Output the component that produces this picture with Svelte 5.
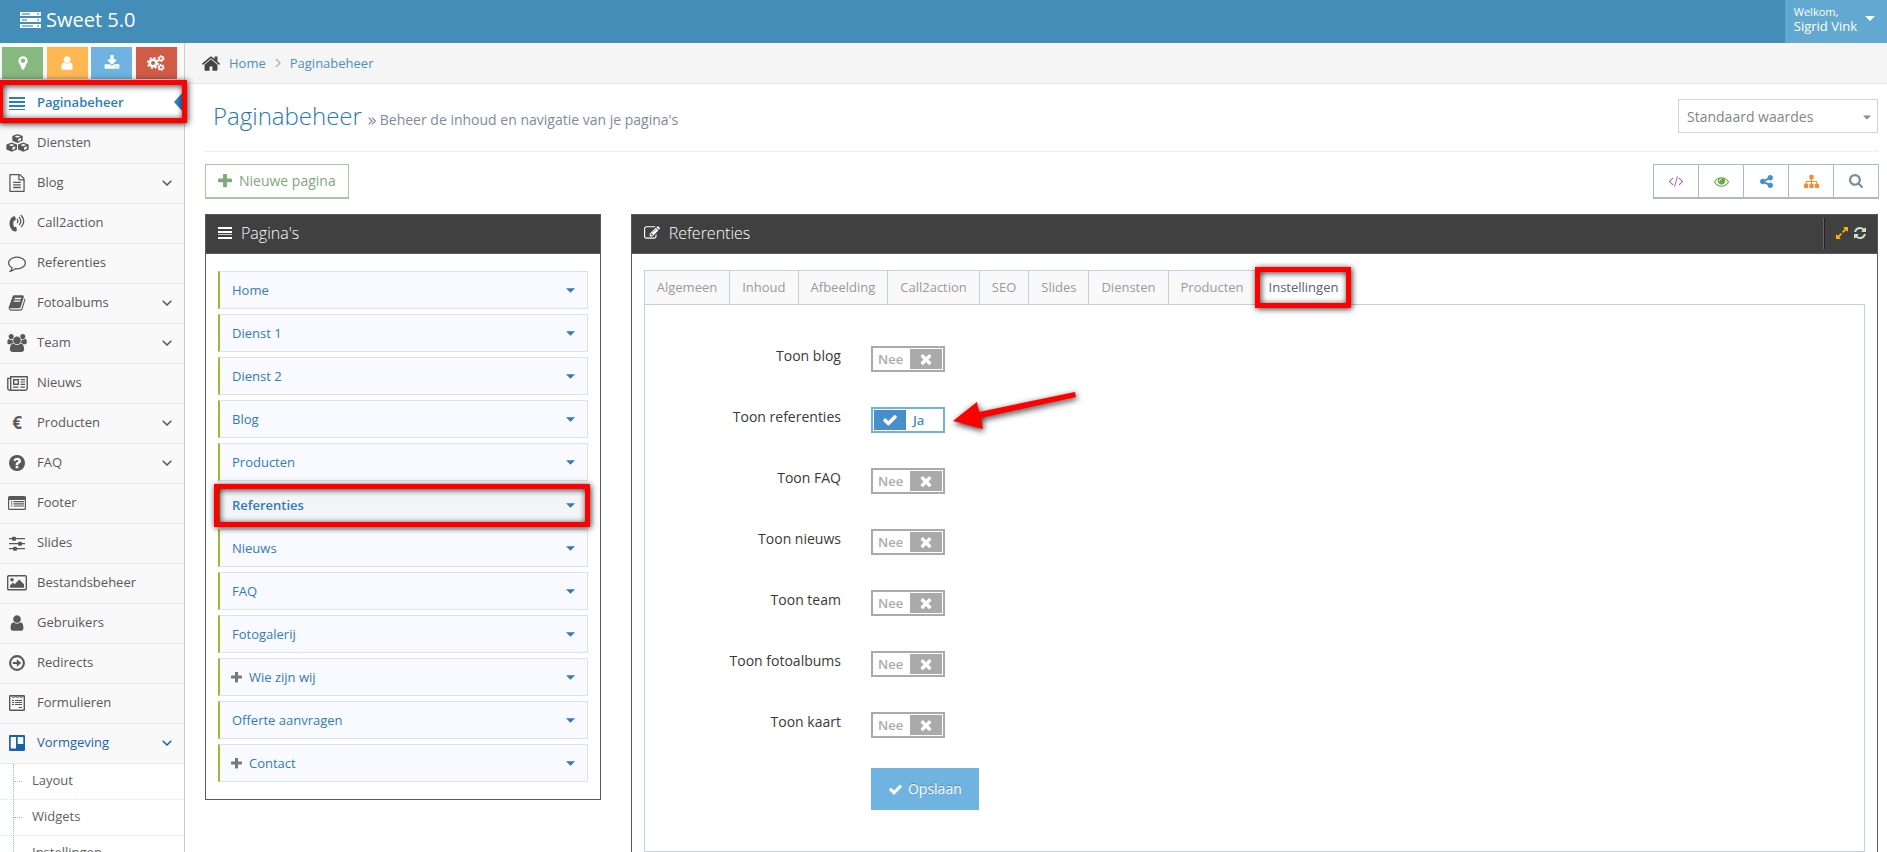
<script>
  const FA = '0 0 1792 1792';

  const icons = {
    server: {
      vb: '0 0 21 16',
      body: '<path fill-rule="evenodd" d="M0 0h21v4H0zM2 1h8v2H2zM17 1h2v2h-2zM0 6h21v4H0zM2 7h5v2H2zM17 7h2v2h-2zM0 12h21v4H0zM2 13h11v2H2zM17 13h2v2h-2z"/><path d="M2 1h17v2H2zM2 7h17v2H2zM2 13h17v2H2z" opacity=".4"/>'
    },
    marker: {
      vb: FA,
      body: '<path d="M1152 640q0-106-75-181t-181-75-181 75-75 181 75 181 181 75 181-75 75-181zm256 0q0 109-33 179l-364 774q-16 33-47.5 52t-67.5 19-67.5-19-46.5-52l-365-774q-33-70-33-179 0-212 150-362t362-150 362 150 150 362z"/>'
    },
    user: {
      vb: FA,
      body: '<path d="M1536 1399q0 109-62.5 187t-150.5 78h-854q-88 0-150.5-78t-62.5-187q0-85 8.5-160.5t31.5-152 58.5-131 94-89 134.5-34.5q131 128 313 128t313-128q76 0 134.5 34.5t94 89 58.5 131 31.5 152 8.5 160.5zm-256-887q0 159-112.5 271.5t-271.5 112.5-271.5-112.5-112.5-271.5 112.5-271.5 271.5-112.5 271.5 112.5 112.5 271.5z"/>'
    },
    download: {
      vb: FA,
      body: '<path d="M1344 1344q0-26-19-45t-45-19-45 19-19 45 19 45 45 19 45-19 19-45zm256 0q0-26-19-45t-45-19-45 19-19 45 19 45 45 19 45-19 19-45zm128-224v320q0 40-28 68t-68 28h-1472q-40 0-68-28t-28-68v-320q0-40 28-68t68-28h465l135 136q58 56 136 56t136-56l136-136h464q40 0 68 28t28 68zm-325-569q17 41-14 70l-448 448q-18 19-45 19t-45-19l-448-448q-31-29-14-70 17-39 59-39h256v-448q0-26 19-45t45-19h256q26 0 45 19t19 45v448h256q42 0 59 39z"/>'
    },
    cogs: {
      vb: '0 0 18 16',
      body: '<g fill="none" stroke="currentColor"><circle cx="6" cy="8" r="3.3" stroke-width="2.6"/><circle cx="6" cy="8" r="5.2" stroke-width="1.8" stroke-dasharray="2 2.08"/><circle cx="14" cy="3.6" r="1.9" stroke-width="1.5"/><circle cx="14" cy="3.6" r="3" stroke-width="1.1" stroke-dasharray="1.6 1.54"/><circle cx="14" cy="12.4" r="1.9" stroke-width="1.5"/><circle cx="14" cy="12.4" r="3" stroke-width="1.1" stroke-dasharray="1.6 1.54"/></g>'
    },
    lines: { vb: '0 0 16 16', body: '<path d="M0 2h16v2H0zM0 6h16v2H0zM0 10h16v2H0zM0 14h16v1H0z"/>' },
    bars: { vb: '0 0 14 14', body: '<path d="M0 1h14v2H0zM0 5h14v2H0zM0 11h14v2H0z"/><path d="M0 8h14v1H0z" opacity=".75"/>' },
    cubes: {
      vb: '0 0 23 18',
      body: '<path d="M11.500 0l5.200 2v4.800l-5.200 2.300-5.200-2.300V2z"/><path d="M5.700 8.500l5.300 2v4.900l-5.300 2.400-5.300-2.400v-4.900z"/><path d="M17.300 8.500l5.300 2v4.900l-5.300 2.400-5.300-2.400v-4.900z"/><g fill="#f9f9f9"><path d="M8.600 2.500l2.900-1.100 2.900 1.100-2.900 1.200z"/><path d="M12.200 4.900l2.800-1.200v2.500l-2.800 1.200z"/><path d="M2.800 11l2.900-1.100L8.600 11l-2.900 1.200z"/><path d="M6.400 13.400l2.800-1.200v2.500l-2.800 1.200z"/><path d="M14.400 11l2.900-1.100 2.900 1.100-2.900 1.200z"/><path d="M18 13.400l2.800-1.200v2.500L18 15.900z"/></g>'
    },
    file: {
      vb: '128 0 1536 1792',
      body: '<path d="M1596 380q28 28 48 76t20 88v1152q0 40-28 68t-68 28h-1344q-40 0-68-28t-28-68v-1600q0-40 28-68t68-28h896q40 0 88 20t76 48zm-444-244v376h376q-10-29-22-41l-313-313q-12-12-41-22zm384 1528v-1024h-416q-40 0-68-28t-28-68v-416h-768v1536h1280zm-1024-864q0-14 9-23t23-9h704q14 0 23 9t9 23v64q0 14-9 23t-23 9h-704q-14 0-23-9t-9-23v-64zm736 224q14 0 23 9t9 23v64q0 14-9 23t-23 9h-704q-14 0-23-9t-9-23v-64q0-14 9-23t23-9h704zm0 256q14 0 23 9t9 23v64q0 14-9 23t-23 9h-704q-14 0-23-9t-9-23v-64q0-14 9-23t23-9h704z"/>'
    },
    phone: {
      vb: '0 0 16 18',
      body: '<path d="M4.800 2.300c.8-.4 1.300 0 1.500.8l.5 2.200c.1.700-.1 1.100-.8 1.300l-1.300.3c-.7 2-.5 4.200.4 6.100l1.200-.2c.7-.1 1.100.2 1.200.9l.3 2.300c0 .8-.3 1.300-1.100 1.400-1.600.1-2.900-.3-3.900-1.600C.6 13-.1 9.600 1 6.400c.6-2 1.900-3.400 3.800-4.100z"/><g fill="none" stroke="currentColor" stroke-width="1.300" stroke-linecap="round"><path d="M8.200 5.400q1.500 1.600.2 3.300"/><path d="M10.200 3.400q3.100 3.500.3 7.200"/><path d="M12.200 1.500q4.900 5.400.3 11.100"/></g>'
    },
    comment: {
      vb: FA,
      body: '<path d="M896 384q-204 0-381.500 69.500t-282 187.500-104.500 255q0 112 71.500 213.500t201.500 175.500l87 50-27 96q-24 91-70 172 152-63 275-171l43-38 57 6q69 8 130 8 204 0 381.500-69.500t282-187.500 104.500-255-104.500-255-282-187.500-381.500-69.500zm896 512q0 174-120 321.500t-326 233-450 85.500q-70 0-145-8-198 175-460 242-49 14-114 22h-5q-15 0-27-10.500t-16-27.500v-1q-3-4-.5-12t2-10 4.500-9.500l6-9 7-8.500 8-9q7-8 31-34.500t34.500-38 31-39.500 32.500-51 27-59 26-76q-157-89-247.500-220t-90.500-281q0-174 120-321.500t326-233 450-85.500 450 85.500 326 233 120 321.500z"/>'
    },
    book: {
      vb: FA,
      body: '<path d="M1703 478q40 57 18 129l-275 906q-19 64-76.500 107.500t-122.500 43.500h-923q-77 0-148.500-53.500t-99.500-131.500q-24-67-2-127 0-4 3-27t4-37q1-8-3-21.500t-3-19.500q2-11 8-21t16.500-23.500 16.500-23.500q23-38 45-91.500t30-91.500q3-10 .5-30t-.5-28q3-11 17-28t17-23q21-36 42-92t25-90q1-9-2.500-32t.5-28q4-13 22-30.500t22-22.500q19-26 42.500-84.500t27.500-96.500q1-8-3-25.500t-2-26.500q2-8 9-18t18-23 17-21q8-12 16.500-30.500t15-35 16-36 19.500-32 26.500-23.500 36-11.500 47.500 5.500l-1 3q38-9 51-9h761q74 0 114 56t18 130l-274 906q-36 119-71.500 153.500t-128.500 34.500h-869q-27 0-38 15-11 16-1 43 24 70 144 70h923q29 0 56-15.500t35-41.500l300-987q7-22 5-57 38 15 59 43zm-1064 2q-4 13 2 22.500t20 9.500h608q13 0 25.500-9.500t16.500-22.500l21-64q4-13-2-22.500t-20-9.500h-608q-13 0-25.500 9.500t-16.500 22.500zm-83 256q-4 13 2 22.500t20 9.500h608q13 0 25.500-9.500t16.500-22.500l21-64q4-13-2-22.500t-20-9.500h-608q-13 0-25.500 9.500t-16.500 22.500z"/>'
    },
    users: {
      vb: '0 0 1920 1792',
      body: '<path d="M593 896q-162 5-265 128h-134q-82 0-138-40.500t-56-118.500q0-353 124-353 6 0 43.500 21t97.500 42.500 119 21.500q67 0 133-23-5 37-5 66 0 159 93 293zm1071 637q0 120-73 189.500t-194 69.500h-874q-121 0-194-69.500t-73-189.500q0-53 3.500-103.500t14-109 26.500-108.500 43-97.500 62-81 85.500-53.500 111.500-20q10 0 43 21.500t73 48 107 48 135 21.500 135-21.500 107-48 73-48 43-21.500q61 0 111.500 20t85.500 53.500 62 81 43 97.500 26.500 108.500 14 109 3.500 103.500zm-1024-1277q0 106-75 181t-181 75-181-75-75-181 75-181 181-75 181 75 75 181zm704 384q0 159-112.500 271.500t-271.500 112.500-271.500-112.500-112.500-271.500 112.500-271.500 271.500-112.500 271.500 112.500 112.500 271.500zm576 225q0 78-56 118.500t-138 40.500h-134q-103-123-265-128 93-134 93-293 0-29-5-66 66 23 133 23 59 0 119-21.500t97.500-42.500 43.500-21q124 0 124 353zm-128-609q0 106-75 181t-181 75-181-75-75-181 75-181 181-75 181 75 75 181z"/>'
    },
    news: {
      vb: '0 0 21 15',
      body: '<g fill="none" stroke="currentColor" stroke-width="1.400"><path d="M3.700 .8h16.500v11.700q0 1.700-1.700 1.700H2.400q1.300 0 1.300-1.700z"/><path d="M3.700 2.400H.8v10.200q0 1.600 1.600 1.600"/><path d="M6.700 3.700h4.600v4.600H6.700z"/><path d="M13.500 3.700H18M13.500 6H18M13.500 8.300H18M6 11.200h5.500M13.500 11.200H18" stroke-width="1.200"/></g>'
    },
    question: {
      vb: '128 128 1536 1536',
      body: '<path d="M1024 1376v-192q0-14-9-23t-23-9h-192q-14 0-23 9t-9 23v192q0 14 9 23t23 9h192q14 0 23-9t9-23zm256-672q0-88-55.500-163t-138.500-116-170-41q-243 0-371 213-15 24 8 42l132 100q7 6 19 6 16 0 25-12 53-68 86-92 34-24 86-24 48 0 85.500 26t37.500 59q0 38-20 61t-68 45q-63 28-115.500 86.500t-52.500 125.500v36q0 14 9 23t23 9h192q14 0 23-9t9-23q0-19 21.500-49.500t54.500-49.500q32-18 49-28.500t46-35 44.500-48 28-60.500 12.500-81zm384 192q0 209-103 385.500t-279.500 279.500-385.500 103-385.500-103-279.500-279.500-103-385.500 103-385.500 279.500-279.500 385.500-103 385.500 103 279.500 279.500 103 385.500z"/>'
    },
    list: {
      vb: '0 0 18 14',
      body: '<path fill-rule="evenodd" d="M1.500 0h15Q18 0 18 1.500v11q0 1.500-1.500 1.500h-15Q0 14 0 12.500v-11Q0 0 1.500 0zM1.200 4v8.300q0 .5.5.5h14.600q.5 0 .5-.5V4z"/><path d="M3 5h1.300v1.200H3zM3 7.200h1.300v1.200H3zM3 9.400h1.300v1.200H3zM5.500 5H16v1.200H5.500zM5.500 7.200H16v1.200H5.500zM5.500 9.400H16v1.200H5.500z"/>'
    },
    sliders: {
      vb: '0 0 16 15',
      body: '<path d="M0 2h16v1.300H0zM0 7h16v1.300H0zM0 12h16v1.300H0z"/><rect x="3" y=".7" width="4" height="4" rx="1"/><rect x="9" y="5.700" width="4" height="4" rx="1"/><rect x="4" y="10.700" width="4" height="4" rx="1"/>'
    },
    picture: {
      vb: '0 0 20 16',
      body: '<rect x=".7" y=".7" width="18.600" height="14" rx="1" fill="none" stroke="currentColor" stroke-width="1.400"/><circle cx="5" cy="4.700" r="1.800"/><path d="M3 12.700v-2.200l3-3 1.700 1.700 4.600-4.700 4.700 4.800v3.400z"/>'
    },
    arrowCircle: {
      vb: '0 0 16 16',
      body: '<circle cx="8" cy="8" r="6.900" fill="none" stroke="currentColor" stroke-width="2.100"/><path d="M3.800 6.900h4V4.300L12.200 8l-4.400 3.700V9.100h-4z"/>'
    },
    form: {
      vb: '0 0 16 16',
      body: '<g fill="none" stroke="currentColor"><rect x=".7" y=".7" width="14.600" height="14.600" rx=".5" stroke-width="1.400"/><path d="M2.500 1l2.200 2 2-2 1.800 2 2-2 1.800 2L14 1" stroke-width="1"/><path d="M3 5.500h2M6 5.500h7M3 7.500h2M6 7.500h7M3 9.500h2M6 9.500h7M9.500 12.500h3.500" stroke-width="1"/></g>'
    },
    board: {
      vb: '0 0 16 16',
      body: '<path fill-rule="evenodd" d="M1 0h14q1 0 1 1v14q0 1-1 1H1q-1 0-1-1V1q0-1 1-1zM1.700 2v11.500H7V2zM8.700 2v7h5.600V2z"/>'
    },
    home: {
      vb: '90 230 1612 1310',
      body: '<path d="M1472 992v480q0 26-19 45t-45 19h-384v-384h-256v384h-384q-26 0-45-19t-19-45v-480q0-1 .5-3t.5-3l575-474 575 474q1 2 1 6zm223-69l-62 74q-8 9-21 11h-3q-13 0-21-7l-692-577-692 577q-12 8-24 7-13-2-21-11l-62-74q-8-10-7-23.500t11-21.500l719-599q32-26 76-26t76 26l244 204v-195q0-14 9-23t23-9h192q14 0 23 9t9 23v408l219 182q10 8 11 21.500t-7 23.500z"/>'
    },
    plus: {
      vb: '192 192 1408 1408',
      body: '<path d="M1600 736v192q0 40-28 68t-68 28h-416v416q0 40-28 68t-68 28h-192q-40 0-68-28t-28-68v-416h-416q-40 0-68-28t-28-68v-192q0-40 28-68t68-28h416v-416q0-40 28-68t68-28h192q40 0 68 28t28 68v416h416q40 0 68 28t28 68z"/>'
    },
    check: {
      vb: FA,
      body: '<path d="M1671 566q0 40-28 68l-724 724-136 136q-28 28-68 28t-68-28l-136-136-362-362q-28-28-28-68t28-68l136-136q28-28 68-28t68 28l294 295 656-657q28-28 68-28t68 28l136 136q28 28 28 68z"/>'
    },
    times: {
      vb: FA,
      body: '<path d="M1490 1322q0 40-28 68l-136 136q-28 28-68 28t-68-28l-294-294-294 294q-28 28-68 28t-68-28l-136-136q-28-28-28-68t28-68l294-294-294-294q-28-28-28-68t28-68l136-136q28-28 68-28t68 28l294 294 294-294q28-28 68-28t68 28l136 136q28 28 28 68t-28 68l-294 294 294 294q28 28 28 68z"/>'
    },
    search: {
      vb: '64 128 1664 1664',
      body: '<path d="M1216 832q0-185-131.500-316.500t-316.500-131.500-316.500 131.500-131.500 316.500 131.500 316.500 316.500 131.500 316.500-131.500 131.500-316.500zm512 832q0 52-38 90t-90 38q-54 0-90-38l-343-342q-179 124-399 124-143 0-273.500-55.500t-225-150-150-225-55.500-273.500 55.500-273.500 150-225 225-150 273.500-55.500 273.500 55.500 225 150 150 225 55.500 273.500q0 220-124 399l343 343q37 37 37 90z"/>'
    },
    share: {
      vb: FA,
      body: '<path d="M1344 1024q133 0 226.500 93.500t93.500 226.500-93.500 226.500-226.500 93.500-226.500-93.500-93.500-226.500q0-12 2-34l-360-180q-92 86-218 86-133 0-226.500-93.500t-93.500-226.500 93.500-226.500 226.500-93.500q126 0 218 86l360-180q-2-22-2-34 0-133 93.500-226.500t226.500-93.500 226.500 93.500 93.500 226.500-93.500 226.500-226.500 93.500q-126 0-218-86l-360 180q2 22 2 34t-2 34l360 180q92-86 218-86z"/>'
    },
    sitemap: {
      vb: FA,
      body: '<path d="M1792 1248v320q0 40-28 68t-68 28h-320q-40 0-68-28t-28-68v-320q0-40 28-68t68-28h96v-192h-512v192h96q40 0 68 28t28 68v320q0 40-28 68t-68 28h-320q-40 0-68-28t-28-68v-320q0-40 28-68t68-28h96v-192h-512v192h96q40 0 68 28t28 68v320q0 40-28 68t-68 28h-320q-40 0-68-28t-28-68v-320q0-40 28-68t68-28h96v-192q0-52 38-90t90-38h512v-192h-96q-40 0-68-28t-28-68v-320q0-40 28-68t68-28h320q40 0 68 28t28 68v320q0 40-28 68t-68 28h-96v192h512q52 0 90 38t38 90v192h96q40 0 68 28t28 68z"/>'
    },
    eye: {
      vb: FA,
      body: '<path d="M1664 960q-152-236-381-353 61 104 61 225 0 185-131.500 316.500t-316.500 131.500-316.500-131.500-131.500-316.500q0-121 61-225-229 117-381 353 133 205 333.500 326.500t434.500 121.500 434.500-121.500 333.500-326.500zm-720-384q0-20-14-34t-34-14q-125 0-214.500 89.500t-89.500 214.500q0 20 14 34t34 14 34-14 14-34q0-86 61-147t147-61q20 0 34-14t14-34zm848 384q0 34-20 69-140 230-376.500 368.500t-499.500 138.500-499.500-139-376.500-368q-20-35-20-69t20-69q140-229 376.500-368t499.500-139 499.500 139 376.500 368q20 35 20 69z"/>'
    },
    code: {
      vb: '0 0 2048 1792',
      body: '<path d="M681 1399l-50 50q-10 10-23 10t-23-10l-466-466q-10-10-10-23t10-23l466-466q10-10 23-10t23 10l50 50q10 10 10 23t-10 23l-393 393 393 393q10 10 10 23t-10 23zm591-1067l-373 1291q-4 13-15.500 19.500t-23.500 2.500l-62-17q-13-4-19.500-15.500t-2.500-24.500l373-1291q4-13 15.500-19.500t23.500-2.500l62 17q13 4 19.500 15.500t2.500 24.500zm657 651l-466 466q-10 10-23 10t-23-10l-50-50q-10-10-10-23t10-23l393-393-393-393q-10-10-10-23t10-23l50-50q10-10 23-10t23 10l466 466q10 10 10 23t-10 23z"/>'
    },
    expand: {
      vb: FA,
      body: '<path d="M883 1056q0 13-10 23l-332 332 144 144q19 19 19 45t-19 45-45 19h-448q-26 0-45-19t-19-45v-448q0-26 19-45t45-19 45 19l144 144 332-332q10-10 23-10t23 10l114 114q10 10 10 23zm781-864v448q0 26-19 45t-45 19-45-19l-144-144-332 332q-10 10-23 10t-23-10l-114-114q-10-10-10-23t10-23l332-332-144-144q-19-19-19-45t19-45 45-19h448q26 0 45 19t19 45z"/>'
    },
    refresh: {
      vb: FA,
      body: '<path d="M1639 1056q0 5-1 7-64 268-268 434.500t-478 166.500q-146 0-282.500-55t-243.500-157l-129 129q-19 19-45 19t-45-19-19-45v-448q0-26 19-45t45-19h448q26 0 45 19t19 45-19 45l-137 137q71 66 161 102t187 36q134 0 250-65t186-179q11-17 53-117 8-23 30-23h192q13 0 22.500 9.500t9.500 22.500zm25-800v448q0 26-19 45t-45 19h-448q-26 0-45-19t-19-45 19-45l138-138q-148-137-349-137-134 0-250 65t-186 179q-11 17-53 117-8 23-30 23h-199q-13 0-22.500-9.500t-9.500-22.500v-7q65-268 270-434.500t480-166.500q146 0 284 55.500t245 156.500l130-129q19-19 45-19t45 19 19 45z"/>'
    },
    edit: {
      vb: FA,
      body: '<path d="M888 1184l116-116-152-152-116 116v56h96v96h56zm440-720q-16-16-33 1l-350 350q-17 17-1 33t33-1l350-350q17-17 1-33zm80 594v190q0 119-84.500 203.500t-203.500 84.500h-832q-119 0-203.500-84.500t-84.500-203.500v-832q0-119 84.500-203.500t203.500-84.500h832q63 0 117 25 15 7 18 23 3 17-9 29l-49 49q-14 14-32 8-23-6-45-6h-832q-66 0-113 47t-47 113v832q0 66 47 113t113 47h832q66 0 113-47t47-113v-126q0-13 9-22l64-64q15-15 35-7t20 29zm-96-738l288 288-672 672h-288v-288zm444 132l-92 92-288-288 92-92q28-28 68-28t68 28l152 152q28 28 28 68t-28 68z"/>'
    },
    down: { vb: '0 0 10 6', body: '<path d="M.7 .7L5 5 9.300 .7" fill="none" stroke="currentColor" stroke-width="1.500"/>' },
    right: { vb: '0 0 6 10', body: '<path d="M1 1l4 4-4 4" fill="none" stroke="currentColor" stroke-width="1.500"/>' },
    double: { vb: '0 0 8 8', body: '<path d="M.7 .7L4 4 .7 7.300M4 .7L7.300 4 4 7.300" fill="none" stroke="currentColor" stroke-width="1.200"/>' },
    caret: { vb: '0 0 10 5', body: '<path d="M0 0h10L5 5z"/>' }
  };

  const shortcuts = [
    { icon: 'marker', tone: 'green', label: 'Locatie' },
    { icon: 'user', tone: 'orange', label: 'Gebruiker' },
    { icon: 'download', tone: 'blue', label: 'Download' },
    { icon: 'cogs', tone: 'red', label: 'Beheer' }
  ];

  const menu = [
    { label: 'Paginabeheer', icon: 'lines', w: 16, h: 16, active: true },
    { label: 'Diensten', icon: 'cubes', w: 23, h: 18 },
    { label: 'Blog', icon: 'file', w: 16, h: 18, sub: true },
    { label: 'Call2action', icon: 'phone', w: 16, h: 18 },
    { label: 'Referenties', icon: 'comment', w: 18, h: 18 },
    { label: 'Fotoalbums', icon: 'book', w: 18, h: 18, sub: true },
    { label: 'Team', icon: 'users', w: 20, h: 18, sub: true },
    { label: 'Nieuws', icon: 'news', w: 21, h: 15 },
    { label: 'Producten', sign: '€', sub: true },
    { label: 'FAQ', icon: 'question', w: 16, h: 16, sub: true },
    { label: 'Footer', icon: 'list', w: 18, h: 14 },
    { label: 'Slides', icon: 'sliders', w: 16, h: 15 },
    { label: 'Bestandsbeheer', icon: 'picture', w: 20, h: 16 },
    { label: 'Gebruikers', icon: 'user', w: 18, h: 18 },
    { label: 'Redirects', icon: 'arrowCircle', w: 16, h: 16 },
    { label: 'Formulieren', icon: 'form', w: 16, h: 16 },
    { label: 'Vormgeving', icon: 'board', w: 16, h: 16, sub: true, open: true }
  ];
  const submenu = ['Layout', 'Widgets', 'Instellingen'];

  const tools = [
    { icon: 'code', color: '#a069c3', w: 16, label: 'Code' },
    { icon: 'eye', color: '#69aa46', w: 15, label: 'Bekijken' },
    { icon: 'share', color: '#478fca', w: 15, label: 'Delen' },
    { icon: 'sitemap', color: '#ff892a', w: 15, label: 'Structuur' },
    { icon: 'search', color: '#778f9b', w: 14, label: 'Zoeken' }
  ];

  const pages = [
    { label: 'Home' },
    { label: 'Dienst 1' },
    { label: 'Dienst 2' },
    { label: 'Blog' },
    { label: 'Producten' },
    { label: 'Referenties', active: true },
    { label: 'Nieuws' },
    { label: 'FAQ' },
    { label: 'Fotogalerij' },
    { label: 'Wie zijn wij', children: true },
    { label: 'Offerte aanvragen' },
    { label: 'Contact', children: true }
  ];

  const tabs = ['Algemeen', 'Inhoud', 'Afbeelding', 'Call2action', 'SEO', 'Slides', 'Diensten', 'Producten', 'Instellingen'];

  let settings = $state([
    { id: 'blog', label: 'Toon blog', on: false },
    { id: 'referenties', label: 'Toon referenties', on: true, pointed: true },
    { id: 'faq', label: 'Toon FAQ', on: false },
    { id: 'nieuws', label: 'Toon nieuws', on: false },
    { id: 'team', label: 'Toon team', on: false },
    { id: 'fotoalbums', label: 'Toon fotoalbums', on: false },
    { id: 'kaart', label: 'Toon kaart', on: false }
  ]);
</script>

{#snippet icon(name, w, h)}
  <svg class="icon" width={w} height={h} viewBox={icons[name].vb} fill="currentColor" aria-hidden="true">{@html icons[name].body}</svg>
{/snippet}

<div class="shell">
  <header class="navbar">
    <a class="brand" href="#top">{@render icon('server', 21, 16)}Sweet 5.0</a>
    <button class="account" type="button">
      <span class="who"><small>Welkom,</small><span>Sigrid Vink</span></span>
      {@render icon('caret', 10, 5)}
    </button>
  </header>

  <div class="columns">
    <aside class="sidebar">
      <div class="shortcuts">
        {#each shortcuts as s}
          <button type="button" class={s.tone} aria-label={s.label}>
            {@render icon(s.icon, s.icon === 'cogs' ? 18 : 16, 16)}
          </button>
        {/each}
      </div>
      <nav>
        <ul class="menu">
          {#each menu as item}
            <li class:active={item.active} class:open={item.open}>
              <a href="#menu">
                <span class="pic">
                  {#if item.sign}<b>{item.sign}</b>{:else}{@render icon(item.icon, item.w, item.h)}{/if}
                </span>
                <span class="name">{item.label}</span>
                {#if item.sub}{@render icon('down', 10, 6)}{/if}
              </a>
              {#if item.active}<span class="mark"></span>{/if}
              {#if item.open}
                <ul class="submenu">
                  {#each submenu as sub}<li><a href="#sub">{sub}</a></li>{/each}
                </ul>
              {/if}
            </li>
          {/each}
        </ul>
      </nav>
    </aside>

    <main>
      <nav class="crumbs">
        {@render icon('home', 18, 15)}
        <a href="#home">Home</a>
        {@render icon('right', 6, 10)}
        <a href="#pages">Paginabeheer</a>
      </nav>

      <div class="content">
        <div class="pagehead">
          <h1>Paginabeheer <small>{@render icon('double', 8, 8)} Beheer de inhoud en navigatie van je pagina's</small></h1>
          <div class="picker">
            <select aria-label="Waardes"><option>Standaard waardes</option></select>
            {@render icon('caret', 8, 5)}
          </div>
        </div>

        <div class="actions">
          <button type="button" class="new">{@render icon('plus', 14, 14)}Nieuwe pagina</button>
          <div class="tools">
            {#each tools as t}
              <button type="button" aria-label={t.label} style:color={t.color}>{@render icon(t.icon, t.w, t.w)}</button>
            {/each}
          </div>
        </div>

        <div class="widgets">
          <section class="widget">
            <h2>{@render icon('bars', 14, 14)}Pagina's</h2>
            <ul class="pages">
              {#each pages as p}
                <li class:active={p.active}>
                  {#if p.children}{@render icon('plus', 11, 11)}{/if}
                  <a href="#page">{p.label}</a>
                  <button type="button" aria-label={'Opties ' + p.label}>{@render icon('caret', 9, 5)}</button>
                </li>
              {/each}
            </ul>
          </section>

          <section class="widget wide">
            <div class="bar">
              <h2>{@render icon('edit', 16, 16)}Referenties</h2>
              <div class="barTools">
                <button type="button" class="gold" aria-label="Vergroten">{@render icon('expand', 14, 14)}</button>
                <button type="button" class="mint" aria-label="Vernieuwen">{@render icon('refresh', 14, 14)}</button>
              </div>
            </div>
            <div class="tabbed">
              <div class="tabs" role="tablist">
                {#each tabs as t}
                  <button type="button" role="tab" aria-selected={t === 'Instellingen'} class:active={t === 'Instellingen'}>{t}</button>
                {/each}
              </div>
              <form class="pane">
                {#each settings as s (s.id)}
                  <div class="row">
                    <label for={s.id}>{s.label}</label>
                    <div class="field">
                      <span class="switch" class:on={s.on}>
                        <input type="checkbox" id={s.id} bind:checked={s.on} />
                        <span class="word">{s.on ? 'Ja' : 'Nee'}</span>
                        <span class="knob">{@render icon(s.on ? 'check' : 'times', 16, 16)}</span>
                      </span>
                      {#if s.pointed}
                        <svg class="pointer" width="140" height="56" viewBox="0 0 140 56" fill="red" aria-hidden="true">
                          <path d="M9 34L33 15l2 10L131 5l1 5L37 31l2 11z" />
                        </svg>
                      {/if}
                    </div>
                  </div>
                {/each}
                <div class="row submit">
                  <button type="button" class="save">{@render icon('check', 15, 15)}Opslaan</button>
                </div>
              </form>
            </div>
          </section>
        </div>
      </div>
    </main>
  </div>
</div>

<style>
  :global(body) {
    margin: 0;
    background: #fff;
    color: #393939;
    font: 13px/20px 'Open Sans', sans-serif;
  }
  * { box-sizing: border-box; }
  a { color: inherit; text-decoration: none; }
  button { font: inherit; color: inherit; background: none; border: 0; padding: 0; cursor: pointer; }
  ul { list-style: none; margin: 0; padding: 0; }
  h1, h2 { margin: 0; font-weight: 300; }
  .icon { display: block; flex: none; }

  .shell { display: flex; flex-direction: column; height: 100vh; overflow: hidden; }
  .navbar {
    flex: none;
    display: flex;
    justify-content: space-between;
    height: 43px;
    background: #438eb9;
    color: #fff;
  }
  .brand { display: flex; align-items: center; gap: 5px; padding: 0 0 4px 20px; font-size: 20px; }
  .account {
    display: flex;
    align-items: center;
    gap: 8px;
    padding: 0 12px 6px 9px;
    background: #62a8d1;
    text-align: left;
  }
  .who { display: flex; flex-direction: column; line-height: 14px; }
  .who small { font-size: 11px; }

  .columns { flex: 1; display: flex; min-height: 0; }
  .sidebar {
    flex: none;
    width: 185px;
    background: #f9f9f9;
    border-right: 1px solid #ccc;
    color: #585858;
  }
  .shortcuts { display: flex; justify-content: space-between; padding: 4px 7px 4px 2px; }
  .shortcuts button {
    display: flex;
    align-items: center;
    justify-content: center;
    width: 41px;
    height: 32px;
    color: #fff;
  }
  .green { background: #87b87f; }
  .orange { background: #ffb752; }
  .blue { background: #6fb3e0; }
  .red { background: #d15b47; }

  .menu { border-top: 1px solid #e5e5e5; }
  .menu > li { position: relative; border-bottom: 1px solid #e5e5e5; }
  .menu > li > a { display: flex; align-items: center; height: 39px; padding: 0 12px 1px 0; }
  .pic { width: 34px; display: flex; justify-content: center; flex: none; }
  .pic b { font-size: 17px; }
  .name { flex: 1; padding: 0 0 3px 3px; }
  .menu > .active { color: #2b7dbc; background: #fff; font-weight: 600; }
  .menu > .active::after {
    content: '';
    position: absolute;
    z-index: 2;
    inset: -4px -3px 0 -2px;
    border: 5px solid red;
    box-shadow: 1px 1px 6px rgba(0, 0, 0, 0.8), inset 1px 1px 6px rgba(0, 0, 0, 0.8);
  }
  .mark {
    position: absolute;
    right: 0;
    top: 7px;
    border: 11px solid transparent;
    border-left-width: 0;
    border-right: 10px solid #2b7dbc;
  }
  .open > a { color: #1963aa; }
  .submenu { position: relative; background: #fff; border-top: 1px solid #e5e5e5; color: #616161; }
  .submenu::before {
    content: '';
    position: absolute;
    left: 13px;
    top: 0;
    bottom: 0;
    border-left: 1px dotted #9dbdd6;
  }
  .submenu li { display: flex; align-items: center; border-bottom: 1px dotted #e4e4e4; }
  .submenu li::before { content: ''; width: 8px; margin-left: 14px; border-top: 1px dotted #9dbdd6; }
  .submenu a { padding: 6px 0 9px 10px; }

  main { flex: 1; min-width: 0; }
  .crumbs {
    display: flex;
    align-items: center;
    gap: 9px;
    height: 41px;
    padding-left: 17px;
    background: #f5f5f5;
    border-bottom: 1px solid #e5e5e5;
    color: #4c8fbd;
  }
  .crumbs .icon { color: #b2b6bf; }
  .crumbs .icon:first-child { color: #444; }
  .content { padding: 0 9px 20px 20px; }
  .pagehead {
    display: flex;
    justify-content: space-between;
    align-items: flex-start;
    height: 68px;
    padding: 15px 0 0 8px;
    border-bottom: 1px dotted #e2e2e2;
  }
  h1 { font-size: 24px; line-height: 34px; color: #2679b5; }
  h1 small { font-size: 14px; font-weight: 400; color: #8089a0; }
  h1 .icon { display: inline-block; }
  .picker { position: relative; width: 200px; }
  .picker select {
    appearance: none;
    width: 100%;
    height: 34px;
    padding: 1px 8px 0;
    border: 1px solid #d5d5d5;
    border-radius: 0;
    background: #fff;
    color: #858585;
    font: inherit;
    font-size: 14px;
  }
  .picker .icon { position: absolute; right: 7px; top: 16px; color: #888; pointer-events: none; }

  .actions { display: flex; justify-content: space-between; padding: 12px 0 15px; }
  .new {
    display: flex;
    align-items: center;
    gap: 7px;
    height: 35px;
    padding: 0 12px;
    border: 1px solid #a7c9a1;
    border-bottom-width: 2px;
    color: #81a87b;
    font-size: 14px;
  }
  .tools { display: flex; margin-right: -1px; border: 1px solid #abbac3; border-bottom-width: 2px; }
  .tools button { display: flex; align-items: center; justify-content: center; width: 44px; }
  .tools button + button { width: 45px; border-left: 1px solid #abbac3; }

  .widgets { display: grid; grid-template-columns: repeat(4, 1fr); gap: 30px; align-items: start; }
  .widget { border: 1px solid #595959; }
  .wide { grid-column: span 3; }
  h2 {
    display: flex;
    align-items: center;
    gap: 9px;
    height: 39px;
    padding: 0 12px 3px;
    background: #404040;
    border-bottom: 1px solid #595959;
    color: #fff;
    font-size: 16px;
  }
  .bar { display: flex; background: #404040; }
  .bar h2 { flex: 1; }
  .barTools {
    display: flex;
    align-items: center;
    gap: 4px;
    padding: 0 10px 2px;
    border-bottom: 1px solid #595959;
  }
  .barTools::before { content: ''; width: 2px; height: 31px; margin-right: 6px; background: linear-gradient(90deg, #666 50%, #222 50%); }
  .gold { color: #ffb400; }
  .mint { color: #d3e4cd; }

  .pages { display: flex; flex-direction: column; gap: 5px; padding: 17px 12px; color: #337ab7; }
  .pages li {
    position: relative;
    display: flex;
    align-items: center;
    gap: 7px;
    height: 38px;
    padding: 0 12px 0 11px;
    border: 1px solid #dae2ea;
    border-left: 2px solid #9abc32;
    background: #f8faff;
  }
  .pages a { flex: 1; }
  .pages a:first-child { padding-left: 1px; }
  .pages .icon { color: #777; }
  .pages button .icon { color: #337ab7; }
  .pages .active { background: #f4f5f7; font-weight: 600; }
  .pages .active::after {
    content: '';
    position: absolute;
    z-index: 2;
    inset: -3px -3px -4px -6px;
    border: 5px solid red;
    box-shadow: 1px 1px 6px rgba(0, 0, 0, 0.8), inset 1px 1px 6px rgba(0, 0, 0, 0.8);
    pointer-events: none;
  }

  .tabbed { padding: 16px 12px 12px; }
  .tabs { display: flex; padding-left: 1px; }
  .tabs button {
    height: 34px;
    padding: 0 12px 1px;
    margin-left: -1px;
    border: 1px solid #c5d0dc;
    border-bottom: 0;
    background: #f9f9f9;
    color: #999;
  }
  .tabs .active { position: relative; margin-bottom: -1px; height: 35px; padding-bottom: 2px; background: #fff; color: #576373; }
  .tabs .active::after {
    content: '';
    position: absolute;
    inset: -4px -1px -3px -2px;
    border: 5px solid red;
    box-shadow: 1px 1px 6px rgba(0, 0, 0, 0.8), inset 1px 1px 6px rgba(0, 0, 0, 0.8);
  }
  .pane {
    display: flex;
    flex-direction: column;
    gap: 35px;
    padding: 41px 27px;
    border: 1px solid #c5d0dc;
    font-size: 14px;
  }
  .row { display: grid; grid-template-columns: repeat(12, 1fr); column-gap: 30px; align-items: start; }
  .submit { margin-top: -5px; }
  .row label { grid-column: 1 / span 2; text-align: right; }
  .field { position: relative; grid-column: 3 / span 10; }
  .switch {
    position: relative;
    display: flex;
    align-items: center;
    width: 74px;
    height: 26px;
    padding: 1px;
    border: 2px solid #aaa;
    color: #aaa;
    font-size: 13px;
    font-weight: 600;
  }
  .switch input { position: absolute; inset: 0; width: 100%; height: 100%; margin: 0; opacity: 0; cursor: pointer; }
  .word { flex: 1; padding-left: 4px; }
  .knob { display: flex; align-items: center; justify-content: center; width: 32px; height: 20px; background: #aaa; color: #fff; }
  .switch.on { flex-direction: row-reverse; border-color: #6fb3e0; color: #478fca; }
  .switch.on .word { padding-left: 7px; }
  .on .knob { background: #478fca; color: #fff; }
  .pointer { position: absolute; left: 73px; top: -20px; filter: drop-shadow(1px 2px 3px rgba(0, 0, 0, 0.8)); overflow: visible; pointer-events: none; }
  .save {
    grid-column: 3 / span 10;
    justify-self: start;
    display: flex;
    align-items: center;
    gap: 5px;
    height: 42px;
    padding: 0 17px;
    background: #6fb3e0;
    color: #fff;
    font-size: 14px;
    text-shadow: 0 -1px 0 rgba(0, 0, 0, 0.25);
  }
</style>
